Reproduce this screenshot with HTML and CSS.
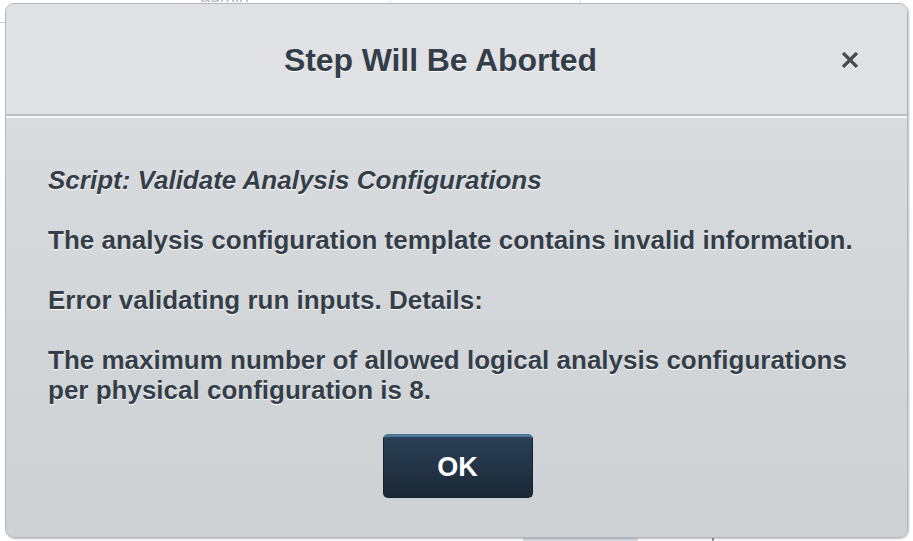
FILE: index.html
```html
<!DOCTYPE html>
<html>
<head>
<meta charset="utf-8">
<link rel="stylesheet" href="styles.css">
</head>
<body>
<div class="backdrop">
  <div class="bg-top">
    <span class="bg-word">admin</span>
    <span class="bg-cell bg-cell-a"></span>
    <span class="bg-cell bg-cell-b"></span>
  </div>
  <div class="bg-left-line"></div>
  <div class="bg-bottom">
    <span class="bg-tab"></span>
    <span class="bg-tick"></span>
  </div>
  <div class="dialog">
    <div class="dialog-header">
      <h1 class="dialog-title">Step Will Be Aborted</h1>
      <button class="dialog-close" aria-label="Close">
        <svg width="20" height="20" viewBox="0 0 20 20"><path d="M3 3 L17 17 M17 3 L3 17" stroke="#4a4d50" stroke-width="3.4" stroke-linecap="butt"/></svg>
      </button>
    </div>
    <div class="dialog-body">
      <p class="script-name">Script: Validate Analysis Configurations</p>
      <p>The analysis configuration template contains invalid information.</p>
      <p>Error validating run inputs. Details:</p>
      <p>The maximum number of allowed logical analysis configurations per physical configuration is 8.</p>
      <div class="actions">
        <button class="btn-ok">OK</button>
      </div>
    </div>
  </div>
</div>
</body>
</html>
```

FILE: styles.css
```css
html, body {
  margin: 0;
  padding: 0;
  background: #ffffff;
  width: 913px;
  height: 541px;
  overflow: hidden;
}

.backdrop {
  position: relative;
  width: 913px;
  height: 541px;
  padding: 3px 5px;
  box-sizing: border-box;
}

.bg-top {
  position: absolute;
  top: 0;
  left: 0;
  right: 0;
  height: 6px;
}

.bg-word {
  position: absolute;
  left: 200px;
  top: -14px;
  font: 18px "Liberation Sans", Arial, sans-serif;
  color: #b8b8b8;
}

.bg-cell {
  position: absolute;
  top: 0;
  height: 4px;
  border-left: 1px solid #e2e2e2;
}

.bg-cell-a { left: 390px; }
.bg-cell-b { left: 580px; }

.bg-left-line {
  position: absolute;
  left: 0;
  top: 22px;
  width: 6px;
  height: 1px;
  background: #cfcfcf;
}

.bg-bottom {
  position: absolute;
  left: 0;
  right: 0;
  bottom: 0;
  height: 4px;
}

.bg-tab {
  position: absolute;
  left: 523px;
  width: 115px;
  top: 0;
  bottom: 0;
  background: #d6dde4;
}

.bg-tick {
  position: absolute;
  left: 712px;
  width: 2px;
  top: 0;
  bottom: 0;
  background: #9a9a9a;
}

.dialog {
  position: relative;
  width: 903px;
  height: 535px;
  box-sizing: border-box;
  border: 1px solid #b4b6b9;
  border-radius: 9px;
  overflow: hidden;
  background: linear-gradient(#dcdee1, #cdd1d4);
  box-shadow: 1px 1px 2px rgba(0, 0, 0, 0.25), inset 0 1px 0 #f4f5f6;
  font-family: "Liberation Sans", Arial, Helvetica, sans-serif;
  color: #343e48;
  display: flex;
  flex-direction: column;
}

.dialog-header {
  height: 110px;
  flex: none;
  background: #dfe1e4;
  border-bottom: 2px solid #bcbec1;
  display: flex;
  align-items: center;
  justify-content: center;
  position: relative;
}

.dialog-title {
  margin: 0;
  font-size: 32px;
  font-weight: bold;
  letter-spacing: -0.1px;
  color: #343e48;
  text-shadow: 0 1px 0 #ffffff;
  position: relative;
  left: -16px;
  top: 1px;
}

.dialog-close {
  position: absolute;
  right: 47px;
  top: 46px;
  width: 20px;
  height: 20px;
  padding: 0;
  border: 0;
  background: transparent;
  display: flex;
  filter: drop-shadow(0 1px 0 #ffffff);
}

.dialog-body {
  flex: 1;
  border-top: 2px solid #f7f8f9;
  padding: 47px 42px 0;
}

.dialog-body p {
  margin: 0 0 30px;
  font-size: 26px;
  line-height: 30px;
  font-weight: bold;
  text-shadow: 0 1px 0 #ffffff;
}

.dialog-body p.script-name {
  font-style: italic;
}

.actions {
  display: flex;
  justify-content: center;
  margin-top: -1px;
}

.btn-ok {
  width: 150px;
  height: 64px;
  box-sizing: border-box;
  border: 1px solid #14202b;
  border-top: 3px solid #4d7595;
  border-radius: 5px;
  background: linear-gradient(#2a4056, #1b2836);
  color: #ffffff;
  font-family: "Liberation Sans", Arial, sans-serif;
  font-weight: bold;
  font-size: 27px;
  padding: 0;
  position: relative;
  left: 1px;
}
```
